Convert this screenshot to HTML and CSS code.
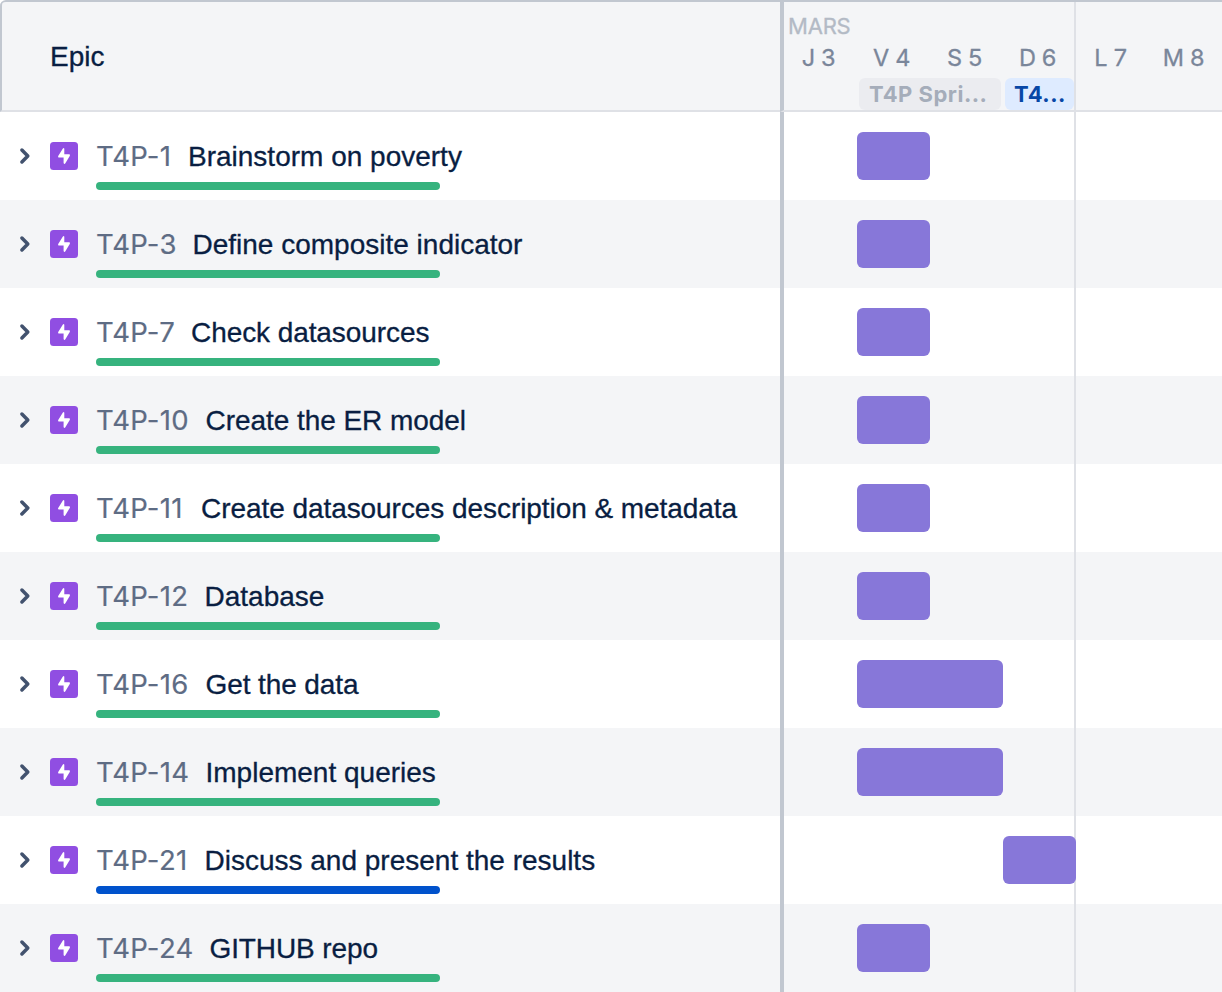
FILE: index.html
```html
<!DOCTYPE html>
<html lang="fr">
<head>
<meta charset="utf-8">
<title>Roadmap</title>
<link rel="stylesheet" href="styles.css">
</head>
<body>
<svg class="defs" width="0" height="0" aria-hidden="true">
  <symbol id="chevron" viewBox="0 0 13 18"><path d="M3.9 3 L9.8 9 L3.9 15" fill="none" stroke="#42526e" stroke-width="3.5" stroke-linecap="round" stroke-linejoin="round"/></symbol>
  <symbol id="epic" viewBox="0 0 28 28"><rect width="28" height="28" rx="3.5" fill="#904ee2"/><path d="M12.9 6.6 L8.2 14 Q7.6 15.5 9 15.5 H13.6 V21 Q14.1 22.4 15.2 21.6 L19.9 13.7 Q20.3 12.3 19 12.3 H14.3 V6.8 Q13.9 5.5 12.9 6.6 Z" fill="#fff"/></symbol>
</svg>
<div class="roadmap">
  <header class="head">
    <div class="head-epic">Epic</div>
    <div class="head-time">
      <div class="month">MARS</div>
      <div class="days"><span>J 3</span><span>V 4</span><span>S 5</span><span>D 6</span><span>L 7</span><span>M 8</span></div>
      <div class="sprints"><span class="sprint done">T4P Spri...</span><span class="sprint active">T4...</span></div>
    </div>
  </header>
  <main class="rows">
    <div class="row r1"><div class="epic"><svg class="chev"><use href="#chevron"/></svg><svg class="icon"><use href="#epic"/></svg><div class="info"><div class="line"><span class="key">T4P-1</span><span class="title">Brainstorm on poverty</span></div><div class="progress"></div></div></div><div class="track"><div class="bar"></div></div></div>
    <div class="row r2"><div class="epic"><svg class="chev"><use href="#chevron"/></svg><svg class="icon"><use href="#epic"/></svg><div class="info"><div class="line"><span class="key">T4P-3</span><span class="title">Define composite indicator</span></div><div class="progress"></div></div></div><div class="track"><div class="bar"></div></div></div>
    <div class="row r3"><div class="epic"><svg class="chev"><use href="#chevron"/></svg><svg class="icon"><use href="#epic"/></svg><div class="info"><div class="line"><span class="key">T4P-7</span><span class="title">Check datasources</span></div><div class="progress"></div></div></div><div class="track"><div class="bar"></div></div></div>
    <div class="row r4"><div class="epic"><svg class="chev"><use href="#chevron"/></svg><svg class="icon"><use href="#epic"/></svg><div class="info"><div class="line"><span class="key">T4P-10</span><span class="title">Create the ER model</span></div><div class="progress"></div></div></div><div class="track"><div class="bar"></div></div></div>
    <div class="row r5"><div class="epic"><svg class="chev"><use href="#chevron"/></svg><svg class="icon"><use href="#epic"/></svg><div class="info"><div class="line"><span class="key">T4P-11</span><span class="title">Create datasources description &amp; metadata</span></div><div class="progress"></div></div></div><div class="track"><div class="bar"></div></div></div>
    <div class="row r6"><div class="epic"><svg class="chev"><use href="#chevron"/></svg><svg class="icon"><use href="#epic"/></svg><div class="info"><div class="line"><span class="key">T4P-12</span><span class="title">Database</span></div><div class="progress"></div></div></div><div class="track"><div class="bar"></div></div></div>
    <div class="row r7"><div class="epic"><svg class="chev"><use href="#chevron"/></svg><svg class="icon"><use href="#epic"/></svg><div class="info"><div class="line"><span class="key">T4P-16</span><span class="title">Get the data</span></div><div class="progress"></div></div></div><div class="track"><div class="bar two-days"></div></div></div>
    <div class="row r8"><div class="epic"><svg class="chev"><use href="#chevron"/></svg><svg class="icon"><use href="#epic"/></svg><div class="info"><div class="line"><span class="key">T4P-14</span><span class="title">Implement queries</span></div><div class="progress"></div></div></div><div class="track"><div class="bar two-days"></div></div></div>
    <div class="row r9"><div class="epic"><svg class="chev"><use href="#chevron"/></svg><svg class="icon"><use href="#epic"/></svg><div class="info"><div class="line"><span class="key">T4P-21</span><span class="title">Discuss and present the results</span></div><div class="progress in-progress"></div></div></div><div class="track"><div class="bar sunday"></div></div></div>
    <div class="row r10"><div class="epic"><svg class="chev"><use href="#chevron"/></svg><svg class="icon"><use href="#epic"/></svg><div class="info"><div class="line"><span class="key">T4P-24</span><span class="title">GITHUB repo</span></div><div class="progress"></div></div></div><div class="track"><div class="bar"></div></div></div>
  </main>
</div>
</body>
</html>
```
FILE: styles.css
```css
* { box-sizing: border-box; }
body { margin: 0; background: #fff; color: #091e42; font-family: "Liberation Sans", Arial, sans-serif; }
.defs { display: block; }
.roadmap { width: 1222px; height: 992px; overflow: hidden; }
.head { display: grid; grid-template-columns: 780px 442px; height: 112px; background: #f4f5f7; border-top: 2px solid #c1c7d0; border-top-left-radius: 6px; }
.head-epic { display: flex; align-items: center; padding: 2px 0 0 48px; border-left: 2px solid #c1c7d0; border-bottom: 2px solid #dfe1e6; border-top-left-radius: 4px; font-size: 28px; -webkit-text-stroke: 0.3px #091e42; }
.head-time { border-left: 4px solid #c1c7d0; border-bottom: 2px solid #dfe1e6; font-family: Inter, sans-serif; background: linear-gradient(#dfe1e6, #dfe1e6) 290px 0 / 2px 100% no-repeat; }
.month { height: 40px; padding: 8px 0 0 4px; font-size: 22px; line-height: 32px; letter-spacing: -0.2px; color: #b3bac5; -webkit-text-stroke: 0.3px #b3bac5; }
.days { display: grid; grid-template-columns: repeat(6, 73px); height: 36px; font-size: 23.5px; line-height: 31px; letter-spacing: -0.3px; color: #7a869a; -webkit-text-stroke: 0.3px #7a869a; }
.days span { padding-right: 4px; text-align: center; white-space: nowrap; }
.sprints { display: flex; gap: 4px; padding-left: 75px; font-size: 22px; font-weight: 700; line-height: 32px; letter-spacing: 0.5px; }
.sprint { height: 32px; padding-left: 10px; border-radius: 6px; white-space: nowrap; }
.done { width: 142px; background: #ebecf0; color: #a5adba; }
.active { width: 69px; padding-left: 9px; background: #deebff; color: #0747a6; }
.row { display: grid; grid-template-columns: 780px 442px; height: 88px; background: #fff; }
.row:nth-child(even) { background: #f4f5f7; }
.epic { display: flex; padding: 30px 0 0 18px; }
.chev { width: 13px; height: 18px; margin: 5px 19px 0 0; }
.icon { width: 28px; height: 28px; margin-right: 18px; }
.line { display: flex; height: 40px; font-size: 28px; line-height: 30px; white-space: nowrap; }
.title { -webkit-text-stroke: 0.3px #091e42; }
.key { flex: none; color: #5e6c84; font-family: Inter, sans-serif; font-size: 27.5px; font-optical-sizing: none; letter-spacing: 0.3px; line-height: 29px; -webkit-text-stroke: 0.2px #5e6c84; }
.progress { width: 344px; height: 8px; border-radius: 4px; background: #36b37e; }
.in-progress { background: #0052cc; }
.track { display: grid; grid-template-columns: repeat(6, 73px); align-items: center; border-left: 4px solid #c1c7d0; background: linear-gradient(#dfe1e6, #dfe1e6) 290px 0 / 2px 100% no-repeat; }
.bar { grid-column: 2; height: 48px; border-radius: 6px; background: #8777d9; }
.two-days { grid-column: 2 / span 2; }
.sunday { grid-column: 4; }
.r1 .key { width: 92px; }
.r2 .key { width: 96.5px; }
.r3 .key { width: 95px; }
.r3 .title { letter-spacing: -0.08px; }
.r4 .key { width: 109.5px; }
.r4 .title { letter-spacing: -0.05px; }
.r5 .key { width: 105px; }
.r5 .title { letter-spacing: -0.06px; }
.r6 .key { width: 108.5px; }
.r7 .key { width: 109.5px; }
.r7 .title { letter-spacing: -0.1px; }
.r8 .key { width: 109.5px; }
.r9 .key { width: 108.5px; }
.r10 .key { width: 113.5px; }
.r10 .title { letter-spacing: -0.1px; }
```
